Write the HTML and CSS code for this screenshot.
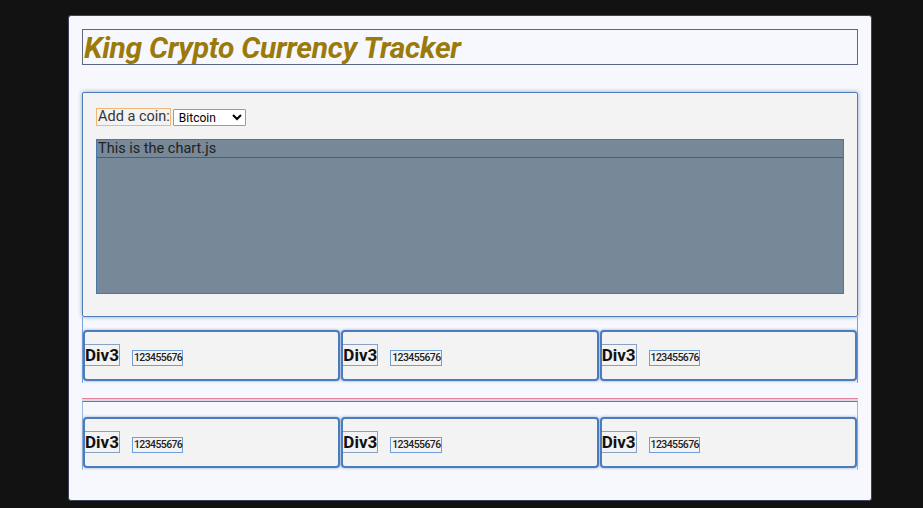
FILE: index.html
```html
<!DOCTYPE html>
<html>
<head>
<meta charset="utf-8">
<link rel="stylesheet" href="styles.css">
</head>
<body>
<div class="app">
  <div class="title-box"><h1 class="title">King Crypto Currency Tracker</h1></div>
  <section class="chart-section">
    <div class="picker">
      <label class="picker-label">Add a coin:</label>
      <select class="picker-select"><option>Bitcoin</option></select>
    </div>
    <div class="chart">
      <p class="chart-text">This is the chart.js</p>
    </div>
  </section>
  <div class="row row-first">
    <div class="card"><span class="card-title">Div3</span><span class="card-num">123455676</span></div>
    <div class="card"><span class="card-title">Div3</span><span class="card-num">123455676</span></div>
    <div class="card"><span class="card-title">Div3</span><span class="card-num">123455676</span></div>
  </div>
  <div class="divider"></div>
  <div class="row row-second">
    <div class="card"><span class="card-title">Div3</span><span class="card-num">123455676</span></div>
    <div class="card"><span class="card-title">Div3</span><span class="card-num">123455676</span></div>
    <div class="card"><span class="card-title">Div3</span><span class="card-num">123455676</span></div>
  </div>
</div>
</body>
</html>
```

FILE: styles.css
```css
html, body {
  margin: 0;
  padding: 0;
}
body {
  background: #121212;
  font-family: Roboto, "Liberation Sans", sans-serif;
  height: 508px;
  overflow: hidden;
}
.app {
  box-sizing: border-box;
  margin: 15px 0 0 68px;
  width: 804px;
  height: 486px;
  background: #f7f8fd;
  border: 1px solid #3c4558;
  border-radius: 3px;
  padding: 13px 13px 0 13px;
}
.title-box {
  box-sizing: border-box;
  height: 36px;
  border: 1px solid #5d6682;
  display: flex;
  align-items: center;
  padding-left: 1px;
}
.title {
  margin: 0;
  font-size: 30px;
  font-style: italic;
  font-weight: 700;
  color: #9b7a0c;
  letter-spacing: -0.3px;
  line-height: 32px;
  position: relative;
  top: 1px;
}
.chart-section {
  box-sizing: border-box;
  margin-top: 27px;
  height: 225px;
  background: #f3f3f3;
  border: 1px solid #4f7db8;
  border-radius: 2px;
  box-shadow: 0 0 4px rgba(70, 110, 170, 0.6);
  padding: 15px 13px 0 13px;
}
.picker {
  display: flex;
  align-items: center;
  gap: 2px;
  height: 18px;
}
.picker-label {
  box-sizing: border-box;
  border: 1px solid #f0b878;
  font-size: 14.5px;
  line-height: 16px;
  color: #333;
  padding: 0 0 0 1px;
  height: 18px;
}
.picker-select {
  box-sizing: border-box;
  width: 73px;
  height: 17px;
  font-family: Roboto, "Liberation Sans", sans-serif;
  font-size: 12px;
  border: 1px solid #c8905a;
  border-radius: 1px;
  background: #fff;
  padding: 0 0 0 1px;
  color: #000;
}
.chart {
  box-sizing: border-box;
  margin-top: 13px;
  height: 155px;
  background: #778899;
  border: 1px solid #4a74ac;
}
.chart-text {
  margin: 0;
  font-size: 14.5px;
  line-height: 17px;
  color: #222;
  border-bottom: 1px solid #c8283e;
  padding-left: 1px;
}
.row {
  box-sizing: border-box;
  border-left: 1px solid #7ca3d8;
  border-right: 1px solid #7ca3d8;
  display: grid;
  grid-template-columns: repeat(3, 1fr);
  gap: 1px;
}
.row-first {
  padding-top: 13px;
  padding-bottom: 2px;
}
.row-second {
  padding-top: 15px;
  padding-bottom: 2px;
  border-top: 1px solid #8a68a8;
  border-left-color: #9ab8e0;
  border-right-color: #9ab8e0;
}
.divider {
  margin-top: 15px;
  height: 2px;
  border-top: 1px solid #e4839c;
  background: #d6d6e6;
}
.card {
  box-sizing: border-box;
  height: 51px;
  background: #f3f3f3;
  border: 2px solid #4a7cc0;
  border-radius: 4px;
  box-shadow: 0 0 3px rgba(70, 110, 170, 0.6);
  display: flex;
  align-items: flex-end;
  padding-bottom: 13px;
}
.card-title {
  box-sizing: border-box;
  border: 1px solid #8aa0c0;
  border-left: none;
  font-size: 17px;
  font-weight: 700;
  color: #111;
  line-height: 20px;
  padding-right: 0;
}
.card-num {
  box-sizing: border-box;
  margin-left: 12px;
  border: 1px solid #6f9fd8;
  font-size: 10.5px;
  font-weight: 500;
  letter-spacing: -0.6px;
  line-height: 14px;
  color: #222;
  padding: 0 0 0 1px;
}
```
